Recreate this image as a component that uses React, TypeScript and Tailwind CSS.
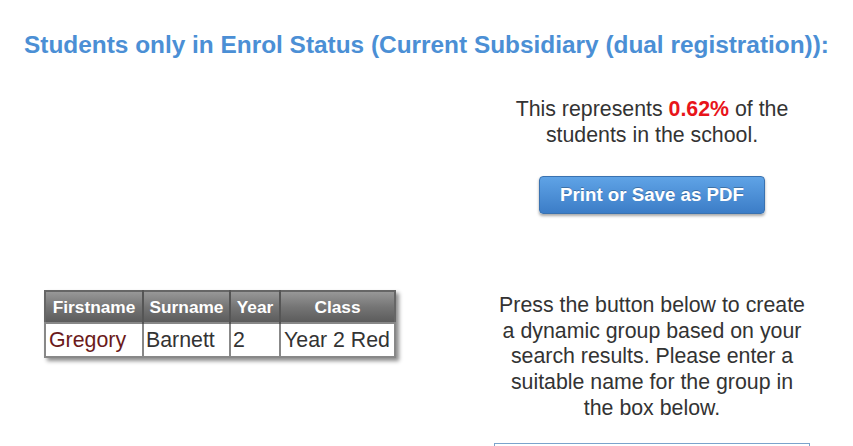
import React from 'react';

const font = { fontFamily: '"Liberation Sans", Arial, sans-serif' };

const rows = [{ first: 'Gregory', last: 'Barnett', year: '2', cls: 'Year 2 Red' }];

export default function App() {
  return (
    <div className="w-[853px] h-[446px] overflow-hidden bg-white text-[#333]" style={font}>
      {/* Title */}
      <h1 className="pt-[31px] text-center text-[24.4px] leading-[28px] font-bold text-[#4b8fd5]">
        Students only in Enrol Status (Current Subsidiary (dual registration)):
      </h1>

      <div className="flex items-start">
        {/* Left: results table */}
        <div className="w-[440px] flex justify-center pt-[231px]">
          <table className="border-collapse border-2 border-[#666] shadow-[3px_3px_4px_rgba(0,0,0,0.45)]">
            <thead>
              <tr className="bg-gradient-to-b from-[#9a9a9a] via-[#757575] to-[#5a5a5a] text-white text-[17.3px] font-bold leading-[30px]">
                <th className="w-[98px] px-[5px] border-r-2 border-[#555] text-center">Firstname</th>
                <th className="w-[87px] px-[3px] border-r-2 border-[#555] text-center">Surname</th>
                <th className="w-[50px] px-[3px] border-r-2 border-[#555] text-center">Year</th>
                <th className="w-[115px] px-[3px] text-center">Class</th>
              </tr>
            </thead>
            <tbody>
              {rows.map((r) => (
                <tr key={r.first} className="bg-white text-[21.33px] leading-[32px]">
                  <td className="px-[3px] border-2 border-[#888] text-[#6b1a1a]">{r.first}</td>
                  <td className="px-[2px] border-2 border-[#888]">{r.last}</td>
                  <td className="px-[2px] border-2 border-[#888]">{r.year}</td>
                  <td className="px-[3px] border-2 border-[#888]">{r.cls}</td>
                </tr>
              ))}
            </tbody>
          </table>
        </div>

        {/* Right: stats, print, group */}
        <div className="ml-[54px] w-[316px] flex flex-col items-center text-center text-[21.33px] leading-[25.6px]">
          <p className="mt-[38px]">
            This represents <span className="font-bold text-[#e8141a]">0.62%</span> of the
            <br />
            students in the school.
          </p>
          <button className="mt-[28px] w-[226px] h-[38px] rounded-[4px] border border-[#3a72b0] bg-gradient-to-b from-[#5fa3e6] to-[#3c7dc7] text-white text-[18.7px] font-bold shadow-[0_2px_3px_rgba(0,0,0,0.35)] [text-shadow:0_-1px_0_rgba(0,0,0,0.25)]">
            Print or Save as PDF
          </button>
          <p className="mt-[79px] px-[2px]">
            Press the button below to create a dynamic group based on your search results. Please enter a
            suitable name for the group in the box below.
          </p>
          <input
            type="text"
            className="mt-[22px] w-[316px] h-[34px] border border-[#7ba3cc] outline-none"
          />
        </div>
      </div>
    </div>
  );
}
